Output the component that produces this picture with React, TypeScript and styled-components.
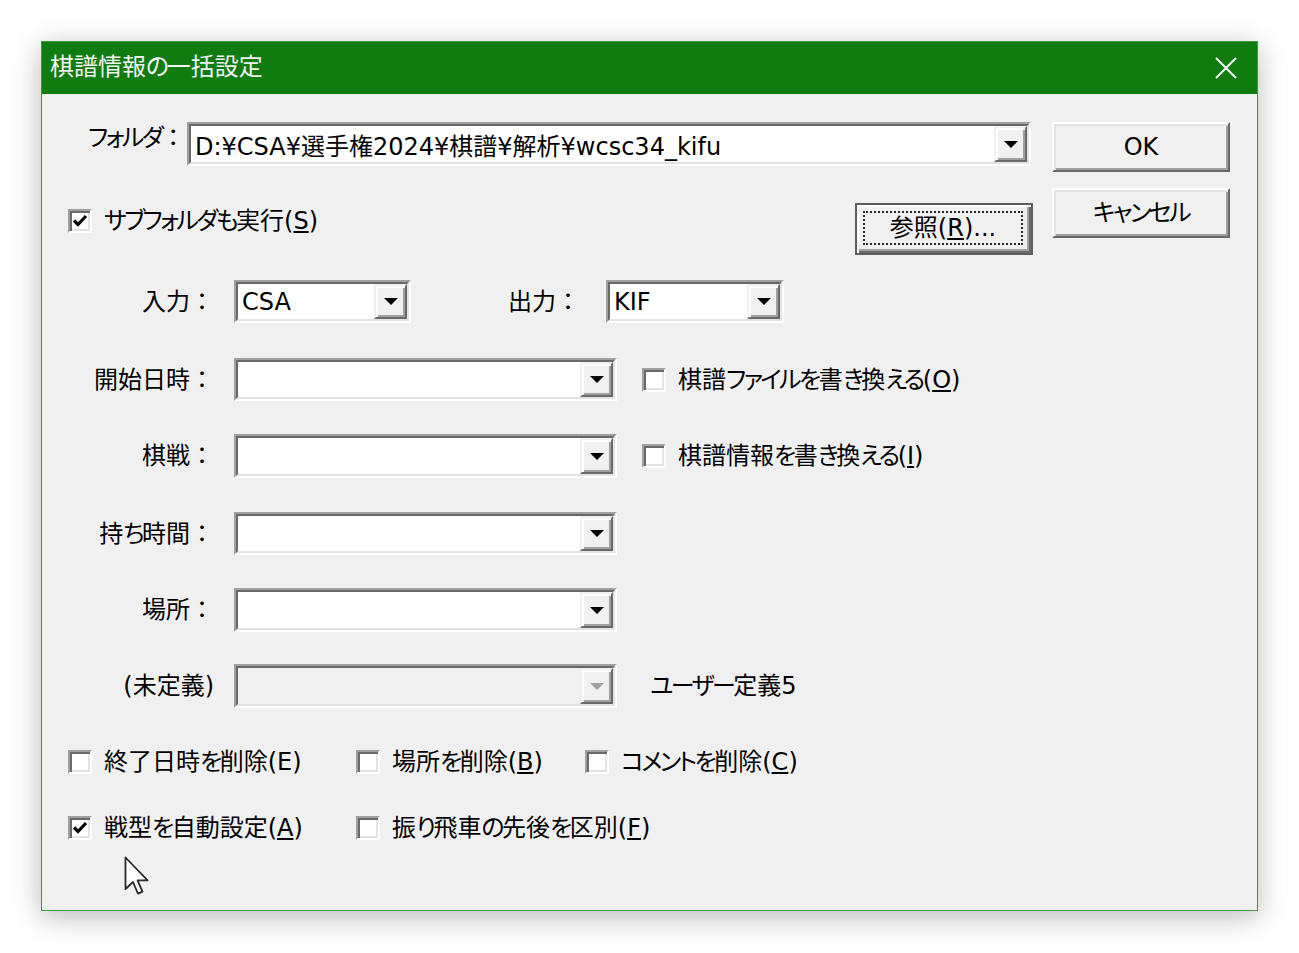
import React from "react";
import styled, { createGlobalStyle } from "styled-components";

const GlobalStyle = createGlobalStyle`
  html, body {
    margin: 0;
    background: #ffffff;
  }
  body {
    font-family: "DejaVu Sans", "Noto Sans CJK JP", sans-serif;
  }
`;

// kana runs get proportional widths, like the dialog font does
const KANA = /([\u3040-\u30ff]+)/;

const jp = (node: React.ReactNode): React.ReactNode =>
	React.Children.map(node, (child) =>
		typeof child === "string"
			? child.split(KANA).map((part, i) => (i % 2 === 1 ? <Kana key={i}>{part}</Kana> : part))
			: child
	);

type ComboProps = {
	value?: string,
	width?: number,
	disabled?: boolean
}

const Combo = (props: ComboProps) => {
	return (
		<ComboFrame $width={props.width}>
			<ComboInner>
				<ComboField $disabled={props.disabled}>{jp(props.value)}</ComboField>
				<DropButton>
					<Arrow $disabled={props.disabled}/>
				</DropButton>
			</ComboInner>
		</ComboFrame>
	)
}

type CheckProps = {
	checked?: boolean,
	children: React.ReactNode
}

const Check = (props: CheckProps) => {
	return (
		<CheckLabel>
			<CheckBox>
				{props.checked && (
					<svg width="16" height="14" viewBox="0 0 16 14">
						<path d="M2 6.5 L6 10.5 L14 2" fill="none" stroke="#000" strokeWidth="3.2"/>
					</svg>
				)}
			</CheckBox>
			<span>{jp(props.children)}</span>
		</CheckLabel>
	)
}

const App = () => {
	return (
		<Page>
			<GlobalStyle/>
			<Window>
				<TitleBar>
					<Title>{jp("棋譜情報の一括設定")}</Title>
					<svg width="24" height="24" viewBox="0 0 24 24">
						<path d="M2 2 L22 22 M22 2 L2 22" stroke="#f4f4f4" strokeWidth="2"/>
					</svg>
				</TitleBar>
				<Body>
					<Main>
						<FolderRow>
							<FolderLabel>{jp("フォルダ：")}</FolderLabel>
							<Combo value="D:¥CSA¥選手権2024¥棋譜¥解析¥wcsc34_kifu"/>
						</FolderRow>
						<SubRow>
							<CheckSlot>
								<Check checked>サブフォルダも実行(<u>S</u>)</Check>
							</CheckSlot>
							<DefaultButton>
								<FocusRect>参照(<u>R</u>)...</FocusRect>
							</DefaultButton>
						</SubRow>

						<FieldRow $top={25} $height={43}>
							<FieldLabel>入力：</FieldLabel>
							<Combo value="CSA" width={177}/>
							<OutLabel>出力：</OutLabel>
							<Combo value="KIF" width={178}/>
						</FieldRow>

						<FieldRow $top={35} $height={43}>
							<FieldLabel>開始日時：</FieldLabel>
							<Combo width={383}/>
							<SideSlot $gap={25}>
								<Check>棋譜ファイルを書き換える(<u>O</u>)</Check>
							</SideSlot>
						</FieldRow>

						<FieldRow $top={33} $height={44}>
							<FieldLabel>棋戦：</FieldLabel>
							<Combo width={383}/>
							<SideSlot $gap={25}>
								<Check>棋譜情報を書き換える(<u>I</u>)</Check>
							</SideSlot>
						</FieldRow>

						<FieldRow $top={34} $height={43}>
							<FieldLabel>{jp("持ち時間：")}</FieldLabel>
							<Combo width={383}/>
						</FieldRow>

						<FieldRow $top={33} $height={44}>
							<FieldLabel>場所：</FieldLabel>
							<Combo width={383}/>
						</FieldRow>

						<FieldRow $top={32} $height={44}>
							<FieldLabel>(未定義)</FieldLabel>
							<Combo width={383} disabled/>
							<SideSlot $gap={33}>
								<Note>{jp("ユーザー定義5")}</Note>
							</SideSlot>
						</FieldRow>

						<CheckGrid $top={39}>
							<Check>終了日時を削除(E)</Check>
							<Check>場所を削除(<u>B</u>)</Check>
							<Check>コメントを削除(<u>C</u>)</Check>
						</CheckGrid>
						<CheckGrid $top={36}>
							<Check checked>戦型を自動設定(<u>A</u>)</Check>
							<Check>振り飛車の先後を区別(<u>F</u>)</Check>
						</CheckGrid>
					</Main>
					<Side>
						<PushButton>OK</PushButton>
						<PushButton>{jp("キャンセル")}</PushButton>
					</Side>
				</Body>
				<Cursor width="27" height="40" viewBox="0 0 13.5 20">
					<path d="M0.75 0.75 L0.75 16.5 L4.5 13 L7 18.8 L9.2 17.8 L6.8 12.2 L11.8 12.2 Z"
						  fill="#ffffff" stroke="#2a2a2a" strokeWidth="0.9" strokeLinejoin="round"/>
				</Cursor>
			</Window>
		</Page>
	)
}

export default App;

const Page = styled.div`
  padding: 41px 0 0 41px;
  height: 953px;
  box-sizing: border-box;
`

const Kana = styled.span`
  font-feature-settings: "palt";
  letter-spacing: -2.5px;
`

const Window = styled.div`
  position: relative;
  width: 1217px;
  height: 870px;
  box-sizing: border-box;
  border: 1px solid #3f983f;
  background: #f0f0f0;
  display: flex;
  flex-direction: column;
  box-shadow: 0 6px 26px rgba(0, 0, 0, 0.28);
  color: #000;
  font-size: 24px;
`

const TitleBar = styled.div`
  height: 52px;
  flex-shrink: 0;
  background: #107c10;
  display: flex;
  align-items: center;
  justify-content: space-between;
  padding: 0 19px 0 8px;
`

const Title = styled.span`
  color: #f2f2f2;
  font-size: 24px;
  line-height: 30px;
  margin-top: -2px;
`

const Body = styled.div`
  flex: 1;
  display: flex;
  padding: 28px 27px 0 26px;
`

const Main = styled.div`
  flex: 1;
  display: flex;
  flex-direction: column;
`

const Side = styled.div`
  width: 178px;
  margin-left: 19px;
  display: flex;
  flex-direction: column;
  gap: 16px;
`

const FolderRow = styled.div`
  display: flex;
  align-items: center;
  height: 44px;
  padding-left: 20px;
  padding-right: 2px;
`

const FolderLabel = styled.span`
  width: 99px;
  flex-shrink: 0;
  line-height: 30px;
  white-space: nowrap;
  margin-top: -12px;
`

const SubRow = styled.div`
  display: flex;
  justify-content: space-between;
  align-items: flex-start;
  margin-top: 37px;
  height: 52px;
`

const CheckSlot = styled.div`
  margin-top: 3px;
`

const FieldRow = styled.div<{ $top: number, $height: number }>`
  display: flex;
  align-items: center;
  margin-top: ${p => p.$top}px;
  height: ${p => p.$height}px;
`

const FieldLabel = styled.span`
  width: 146px;
  margin-right: 20px;
  flex-shrink: 0;
  text-align: right;
  line-height: 30px;
  white-space: nowrap;
`

const OutLabel = styled.span`
  width: 72px;
  margin-left: 97px;
  margin-right: 26px;
  flex-shrink: 0;
  line-height: 30px;
`

const SideSlot = styled.div<{ $gap: number }>`
  margin-left: ${p => p.$gap}px;
`

const Note = styled.span`
  line-height: 30px;
`

const CheckGrid = styled.div<{ $top: number }>`
  display: grid;
  grid-template-columns: 288px 229px auto;
  margin-top: ${p => p.$top}px;
  height: 30px;
`

const ComboFrame = styled.div<{ $width?: number }>`
  ${p => p.$width ? `width: ${p.$width}px;` : "flex: 1;"}
  height: 100%;
  box-sizing: border-box;
  border: 2px solid;
  border-color: #a0a0a0 #ffffff #ffffff #a0a0a0;
  flex-shrink: 0;
`

const ComboInner = styled.div`
  height: 100%;
  box-sizing: border-box;
  border: 2px solid;
  border-color: #696969 #e3e3e3 #e3e3e3 #696969;
  display: flex;
`

const ComboField = styled.div<{ $disabled?: boolean }>`
  flex: 1;
  background: ${p => p.$disabled ? "#f0f0f0" : "#ffffff"};
  padding-left: 4px;
  display: flex;
  align-items: center;
  white-space: nowrap;
  overflow: hidden;
`

const DropButton = styled.div`
  width: 33px;
  background: #f0f0f0;
  box-sizing: border-box;
  border: 2px solid;
  border-color: #f0f0f0 #696969 #696969 #f0f0f0;
  box-shadow: inset 2px 2px #ffffff, inset -2px -2px #a0a0a0;
  display: flex;
  align-items: center;
  justify-content: center;
`

const Arrow = styled.span<{ $disabled?: boolean }>`
  width: 0;
  height: 0;
  border-left: 7px solid transparent;
  border-right: 7px solid transparent;
  border-top: 7px solid ${p => p.$disabled ? "#a0a0a0" : "#000000"};
`

const CheckLabel = styled.label`
  display: flex;
  align-items: center;
  gap: 12px;
  height: 30px;
  line-height: 30px;
  white-space: nowrap;
`

const CheckBox = styled.span`
  width: 24px;
  height: 24px;
  box-sizing: border-box;
  flex-shrink: 0;
  background: #ffffff;
  border: 2px solid;
  border-color: #a0a0a0 #ffffff #ffffff #a0a0a0;
  box-shadow: inset 2px 2px #696969, inset -2px -2px #e3e3e3;
  display: flex;
  align-items: center;
  justify-content: center;
`

const PushButton = styled.div`
  height: 50px;
  box-sizing: border-box;
  border: 2px solid;
  border-color: #ffffff #696969 #696969 #ffffff;
  box-shadow: inset 2px 2px #e3e3e3, inset -2px -2px #a0a0a0;
  background: #f0f0f0;
  display: flex;
  align-items: center;
  justify-content: center;
  line-height: 30px;
`

const DefaultButton = styled.div`
  width: 178px;
  height: 52px;
  box-sizing: border-box;
  border: 2px solid #5e5e5e;
  background: #f0f0f0;
  box-shadow: inset 2px 2px #ffffff, inset -2px -2px #696969, inset -4px -4px #a0a0a0;
  padding: 6px 8px 8px 6px;
  display: flex;
`

const FocusRect = styled.div`
  flex: 1;
  border: 2px dotted #2a2a2a;
  display: flex;
  align-items: center;
  justify-content: center;
  line-height: 30px;
`

const Cursor = styled.svg`
  position: absolute;
  left: 82px;
  top: 814px;
`
